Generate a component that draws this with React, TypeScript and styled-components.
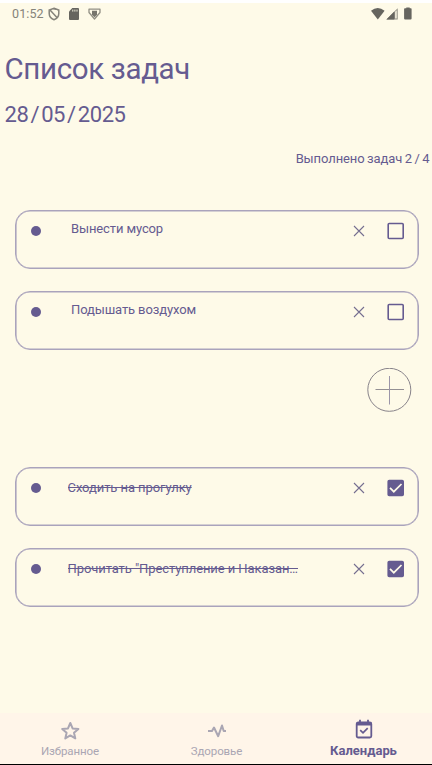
import React from "react";
import styled, { createGlobalStyle } from "styled-components";

const ink = "#655b90";
const paper = "#fefae8";

const GlobalStyle = createGlobalStyle`
  *, *::before, *::after { box-sizing: border-box; }
  body { margin: 0; background: #fff; font-family: Roboto, sans-serif; }
  button { padding: 0; border: 0; background: none; font: inherit; color: inherit; display: block; }
  svg { display: block; }
`;

const Screen = styled.div`
  width: 432px;
  height: 765px;
  display: flex;
  flex-direction: column;
  overflow: hidden;
  color: ${ink};
  background: ${paper};
  border-top: 3px solid #fff;
  border-bottom: 1px solid #000;
`;

const StatusBar = styled.header`
  height: 22px;
  flex: none;
  display: flex;
  justify-content: space-between;
  padding: 0 19px 0 12px;
  color: #66655f;
`;

const StatusGroup = styled.div`
  display: flex;
  align-items: center;
`;

const Clock = styled.span`
  width: 36px;
  font-size: 12.5px;
  line-height: 22px;
  letter-spacing: 0.1px;
  color: #85837a;
`;

const Heading = styled.h1`
  margin: 26px 0 0 4.5px;
  font-size: 29.5px;
  line-height: 36px;
  font-weight: 400;
  letter-spacing: -0.35px;
`;

const DateLine = styled.div`
  margin: 14px 0 0 4.5px;
  font-size: 22px;
  line-height: 28px;
  letter-spacing: -0.45px;
  word-spacing: -2.9px;
`;

const Progress = styled.div`
  margin: 21px 2.5px 0 0;
  text-align: right;
  font-size: 13px;
  line-height: 18px;
  letter-spacing: -0.1px;
  word-spacing: -0.6px;
`;

const TaskList = styled.ul<{ $top: number }>`
  list-style: none;
  margin: ${(p) => p.$top}px 13px 0 15px;
  padding: 0;
  display: grid;
  gap: 22px;
`;

const TaskCard = styled.li`
  height: 59px;
  display: flex;
  align-items: flex-start;
  border: 1px solid #aaa3bc;
  box-shadow: inset 0 0 0 0.6px #aaa3bc;
  border-radius: 15px;
  padding: 11px 13px 0 15px;
`;

const Bullet = styled.span`
  width: 10px;
  height: 10px;
  margin: 4px 0.5px 0 0;
  border-radius: 50%;
  background: ${ink};
  flex: none;
`;

const TaskText = styled.span<{ $done: boolean }>`
  width: 232px;
  margin-left: ${(p) => (p.$done ? 26 : 29.5)}px;
  margin-right: ${(p) => (p.$done ? 53.5 : 50)}px;
  margin-top: ${(p) => (p.$done ? 0 : -2)}px;
  flex: none;
  font-size: 13px;
  line-height: 18px;
  letter-spacing: ${(p) => (p.$done ? -0.08 : -0.12)}px;
  white-space: nowrap;
  overflow: hidden;
  text-decoration: ${(p) => (p.$done ? "line-through" : "none")};
`;

const RemoveButton = styled.button`
  margin-top: 3px;
`;

const CheckButton = styled.button`
  margin-left: auto;
`;

const AddButton = styled.button`
  align-self: flex-end;
  margin: 18px 20px 0 0;
`;

const Nav = styled.nav`
  height: 51px;
  margin-top: auto;
  flex: none;
  display: grid;
  grid-template-columns: 140px 153px 141px;
  background: #fff5e9;
`;

const NavItem = styled.a<{ $active?: boolean }>`
  display: flex;
  flex-direction: column;
  align-items: center;
  padding-top: ${(p) => (p.$active ? 6 : 7)}px;
  color: ${(p) => (p.$active ? ink : "#aaa6b3")};
  font-weight: ${(p) => (p.$active ? 700 : 400)};
  font-size: ${(p) => (p.$active ? 13 : 11.5)}px;
  letter-spacing: ${(p) => (p.$active ? 0 : -0.1)}px;
`;

const NavLabel = styled.span<{ $offset?: number }>`
  line-height: 16px;
  margin-top: ${(p) => p.$offset ?? 1}px;
`;

const ShieldOff = () => (
  <svg width="12" height="14" viewBox="0 0 12 14" fill="none" stroke="#85837a" strokeWidth="1.500">
    <path d="M6 1.200 10.800 3v3.600c0 2.800-1.800 5-4.800 6.100C3 11.600 1.200 9.400 1.200 6.600V3z" />
    <path d="M2 3 9.400 11" />
    <path d="M5 1.800 10 2.800" strokeWidth="1" />
  </svg>
);

const SdCard = styled(({ className }: { className?: string }) => (
  <svg className={className} width="10" height="12" viewBox="0 0 10 12">
    <path d="M3.300 0H9q1 0 1 1v10q0 1-1 1H1q-1 0-1-1V3.500z" fill="currentColor" />
    <path d="M3.800 1.600v2M5.900 1.600v2M8 1.600v2" stroke={paper} strokeWidth=".9" />
  </svg>
))`
  margin-left: 9px;
`;

const TriangleShield = styled(({ className }: { className?: string }) => (
  <svg className={className} width="13" height="12" viewBox="0 0 13 12">
    <path d="M1 1.200h11v3.300L6.500 11 1 4.500z" fill="none" stroke="#918f84" strokeWidth="1.300" strokeLinejoin="round" />
    <path d="M4 2.800h5v4L6.500 9.200 4 6.800z" fill="#77756d" />
  </svg>
))`
  margin-left: 8.5px;
`;

const SignalIcons = () => (
  <svg width="42" height="14" viewBox="0 0 42 14">
    <path d="M0 3.700Q6.700-1.500 13.600 3.700L6.800 12.500z" fill="currentColor" />
    <path d="M15.400 12.500 26.700 1.200v11.300z" fill="#8f8d83" />
    <path d="M15.400 12.500 23.300 4.600v7.900z" fill="currentColor" />
    <path d="M24.200 4.700 25.700 3.200v8.300h-1.500z" fill={paper} />
    <path d="M34 1.200h1.300V.5h3.400v.7h1.200q.7 0 .7.900v9.400q0 1-1 1h-5.500q-1 0-1-1V2.100q0-.9.900-.9z" fill="currentColor" />
  </svg>
);

const Cross = () => (
  <svg width="12" height="12" viewBox="0 0 12 12" fill="none" stroke="#756e90" strokeWidth="1.100">
    <path d="M1 1 11 11M11 1 1 11" />
  </svg>
);

const Checkbox = ({ checked }: { checked: boolean }) => (
  <svg width="18" height="18" viewBox="0 0 18 18" fill="none">
    <rect x="1.200" y="1.500" width="15" height="15" rx="1" stroke={ink} strokeWidth="1.600" fill={checked ? ink : "none"} />
    {checked && <path d="M3 8.900 6.800 12.700 14.500 5" stroke={paper} strokeWidth="1.700" />}
  </svg>
);

const PlusCircle = () => (
  <svg width="45" height="45" viewBox="0 0 45 45" fill="none" stroke="#88838a">
    <circle cx="22.300" cy="21.800" r="21.500" />
    <path d="M8.500 21.500H37" strokeWidth=".9" />
    <path d="M22.500 8V36.500" strokeWidth="1" stroke="#9b95a8" />
  </svg>
);

const Star = () => (
  <svg width="20" height="22" viewBox="0 0 20 22" fill="none" stroke="currentColor" strokeWidth="2" strokeLinejoin="round">
    <path d="M10.300 3 12.600 8.400 18.400 8.900 14 12.700 15.300 18.400 10.300 15.400 5.300 18.400 6.600 12.700 2.200 8.900 8 8.400z" />
  </svg>
);

const Pulse = () => (
  <svg width="20" height="22" viewBox="0 0 20 22" fill="none" stroke="currentColor" strokeWidth="2" strokeLinejoin="round">
    <path d="M1 11h4l2-3.500 4.200 8.700L15 5.500 16.700 11H19" />
  </svg>
);

const CalendarCheck = () => (
  <svg width="18" height="22" viewBox="0 0 18 22" fill="none" stroke="currentColor">
    <rect x="1.700" y="3.500" width="14.600" height="15" rx="1.500" strokeWidth="1.800" />
    <path d="M1.500 5h15" strokeWidth="3" />
    <path d="M5 .8v3M13 .8v3" strokeWidth="1.800" />
    <path d="m5.200 11.200 2.800 2.700 4.700-4.800" strokeWidth="1.700" />
  </svg>
);

const Task = ({ text, done = false }: { text: string; done?: boolean }) => (
  <TaskCard>
    <Bullet />
    <TaskText $done={done}>{text}</TaskText>
    <RemoveButton aria-label="Удалить"><Cross /></RemoveButton>
    <CheckButton role="checkbox" aria-checked={done}><Checkbox checked={done} /></CheckButton>
  </TaskCard>
);

export default function App() {
  return (
    <>
      <GlobalStyle />
      <Screen>
        <StatusBar>
          <StatusGroup>
            <Clock>01:52</Clock>
            <ShieldOff />
            <SdCard />
            <TriangleShield />
          </StatusGroup>
          <StatusGroup><SignalIcons /></StatusGroup>
        </StatusBar>
        <Heading>Список задач</Heading>
        <DateLine>28 / 05 / 2025</DateLine>
        <Progress>Выполнено задач 2 / 4</Progress>
        <TaskList $top={42}>
          <Task text="Вынести мусор" />
          <Task text="Подышать воздухом" />
        </TaskList>
        <AddButton aria-label="Добавить"><PlusCircle /></AddButton>
        <TaskList $top={54}>
          <Task done text="Сходить на прогулку" />
          <Task done text={'Прочитать "Преступление и Наказан…'} />
        </TaskList>
        <Nav>
          <NavItem><Star /><NavLabel>Избранное</NavLabel></NavItem>
          <NavItem><Pulse /><NavLabel>Здоровье</NavLabel></NavItem>
          <NavItem $active><CalendarCheck /><NavLabel $offset={2}>Календарь</NavLabel></NavItem>
        </Nav>
      </Screen>
    </>
  );
}
